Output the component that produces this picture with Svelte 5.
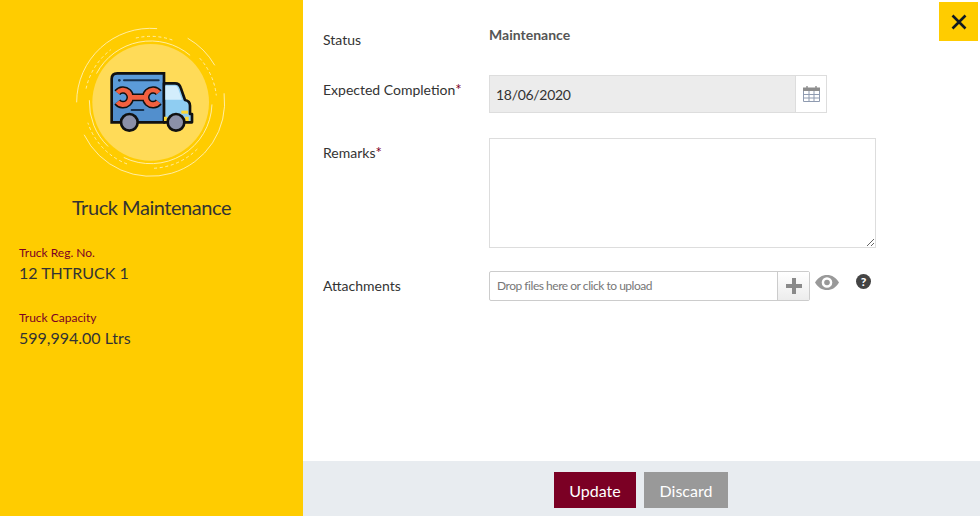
<script>
	const cx = 272;
	const cy = 262;

	// rings round the truck: radius, start and end angle (clockwise from 12 o'clock), dashed
	const rings = [
		[222, 270, 365, false],
		[222, 30, 60, false],
		[222, 83, 244, false],
		[198, 347, 380, true],
		[198, 48, 84, true],
		[198, 135, 178, true],
		[198, 201, 252, true],
		[198, 282, 323, true],
		[184, 298, 400, false],
		[184, 92, 206, false],
		[184, 224, 272, false]
	];

	function arc(r, from, to) {
		const a = ((from - 90) * Math.PI) / 180;
		const b = ((to - 90) * Math.PI) / 180;
		const big = to - from > 180 ? 1 : 0;
		const x0 = (cx + r * Math.cos(a)).toFixed(1);
		const y0 = (cy + r * Math.sin(a)).toFixed(1);
		const x1 = (cx + r * Math.cos(b)).toFixed(1);
		const y1 = (cy + r * Math.sin(b)).toFixed(1);
		return `M${x0} ${y0}A${r} ${r} 0 ${big} 1 ${x1} ${y1}`;
	}

	const wrench = 'M172 233A22 22 0 1 1 172 261M207 247H261M296 233A22 22 0 1 0 296 261';
</script>

<div class="page">
	<aside class="side">
		<svg class="badge" viewBox="0 0 540 510" width="180" height="170" aria-hidden="true">
			<circle cx={cx} cy={cy} r="175" fill="#ffdb58" />
			{#each rings as [r, from, to, dashed]}
				<path d={arc(r, from, to)} fill="none" stroke="#fff3c4" stroke-width="2.5" stroke-dasharray={dashed ? '9 8' : 'none'} />
			{/each}

			<!-- box -->
			<path d="M155 322V192Q155 175 172 175H312V322Z" fill="#5b9bd9" stroke="#111" stroke-width="8" />
			<path d="M159 262H308V318H159Z" fill="#528fcd" />
			<circle cx="178" cy="196" r="4" fill="#17324f" />
			<path d="M192 196H296M215 285H250" stroke="#17324f" stroke-width="6" stroke-linecap="round" />

			<!-- wrench -->
			<path d={wrench} fill="none" stroke="#111" stroke-width="23" />
			<path d={wrench} fill="none" stroke="#f2603f" stroke-width="14" />

			<!-- cab -->
			<path d="M312 205H345Q358 205 362 218L375 255Q390 258 390 272V297H396V322H312Z" fill="#8fcdf2" stroke="#111" stroke-width="8" stroke-linejoin="round" />
			<path d="M316 212H345Q352 212 355 222L366 254H316Z" fill="#d3edfc" />
			<path d="M364 287H384V296H364Z" fill="#fdd835" />
			<path d="M312 305H322V318H312ZM375 305H386V318H375Z" fill="#fdd835" />

			<!-- wheels -->
			<circle cx="208" cy="322" r="25" fill="#8b90a8" stroke="#111" stroke-width="8" />
			<circle cx="348" cy="322" r="25" fill="#8b90a8" stroke="#111" stroke-width="8" />
		</svg>

		<h2 class="title">Truck Maintenance</h2>

		<div class="info">
			<div class="info-label">Truck Reg. No.</div>
			<div class="info-value">12 THTRUCK 1</div>
		</div>
		<div class="info">
			<div class="info-label">Truck Capacity</div>
			<div class="info-value">599,994.00 Ltrs</div>
		</div>
	</aside>

	<main class="main">
		<form class="form">
			<div class="label status-label">Status</div>
			<div class="status-value">Maintenance</div>

			<div class="label">Expected Completion<span class="req">*</span></div>
			<div class="date-field">
				<input class="date-input" type="text" value="18/06/2020" readonly />
				<span class="date-btn">
					<svg viewBox="0 0 17 16" width="17" height="16" aria-hidden="true">
						<path d="M4 0V2M13 0V2" stroke="#8d8d8d" stroke-width="1.4" />
						<rect x="0" y="1.5" width="17" height="3.5" fill="#8d8d8d" />
						<path d="M.5 5V15.5H16.5V5M.5 8.5H16.5M.5 12H16.5M6 5V15.5M11 5V15.5" fill="none" stroke="#8f9bb0" stroke-width="1" />
					</svg>
				</span>
			</div>

			<div class="label">Remarks<span class="req">*</span></div>
			<div><textarea class="remarks"></textarea></div>

			<div class="label">Attachments</div>
			<div class="attach-row">
				<div class="upload">
					<span class="upload-text">Drop files here or click to upload</span>
					<span class="upload-btn">
						<svg viewBox="0 0 16 16" width="16" height="16" aria-hidden="true">
							<path d="M6 0H10V6H16V10H10V16H6V10H0V6H6Z" fill="#8a8a8a" />
						</svg>
					</span>
				</div>
				<svg class="eye" viewBox="0 0 24 15" width="24" height="15" aria-hidden="true">
					<path fill-rule="evenodd" d="M0 7.5C3 2.5 7 0 12 0S21 2.5 24 7.5C21 12.5 17 15 12 15S3 12.5 0 7.5ZM12 2.2A5.3 5.3 0 1 0 12 12.8A5.3 5.3 0 1 0 12 2.2Z" fill="#999" />
					<circle cx="12" cy="7.5" r="2.8" fill="#999" />
				</svg>
				<span class="help">?</span>
			</div>
		</form>

		<footer class="footer">
			<button class="btn btn-update" type="button">Update</button>
			<button class="btn btn-discard" type="button">Discard</button>
		</footer>

		<button class="close" type="button" aria-label="Close">
			<svg viewBox="0 0 16 16" width="16" height="16" aria-hidden="true">
				<path d="M1.5 1.5L14.5 14.5M14.5 1.5L1.5 14.5" stroke="#111a22" stroke-width="2.6" />
			</svg>
		</button>
	</main>
</div>

<style>
	:global(body) {
		margin: 0;
		background: #fff;
	}

	.page {
		display: flex;
		width: 980px;
		height: 516px;
		overflow: hidden;
		font-family: Lato, "Open Sans", sans-serif;
		color: #333;
	}

	.side {
		width: 303px;
		flex: none;
		background: #ffcc00;
		padding-top: 15px;
		box-sizing: border-box;
	}

	.badge {
		display: block;
		margin-left: 60px;
	}

	.title {
		margin: 10px 0 26px;
		font-size: 20px;
		font-weight: 400;
		line-height: 24px;
		letter-spacing: -0.45px;
		text-align: center;
	}

	.info {
		padding-left: 19px;
		margin-bottom: 25px;
	}

	.info-label {
		font-size: 12px;
		line-height: 16px;
		color: #7b0024;
	}

	.info-value {
		font-size: 16px;
		line-height: 24px;
	}

	.main {
		position: relative;
		flex: 1;
		display: flex;
		flex-direction: column;
	}

	.form {
		flex: 1;
		display: grid;
		grid-template-columns: 166px 1fr;
		grid-template-rows: 49px 63px 133px 30px;
		padding: 26px 0 0 20px;
	}

	.label {
		font-size: 14px;
		line-height: 18px;
		padding-top: 6px;
	}

	.status-label {
		padding-top: 5px;
	}

	.req {
		color: #7b0024;
		font-size: 15px;
		line-height: 0;
	}

	.status-value {
		font-size: 14px;
		font-weight: 700;
		line-height: 18px;
		color: #555;
	}

	.date-field {
		display: flex;
		width: 338px;
		height: 38px;
	}

	.date-input {
		flex: 1;
		min-width: 0;
		box-sizing: border-box;
		height: 38px;
		padding: 0 6px;
		border: 1px solid #ddd;
		border-right: none;
		background: #ececec;
		font: 14px Lato, sans-serif;
		letter-spacing: -0.3px;
		color: #333;
		outline: none;
	}

	.date-btn {
		width: 32px;
		box-sizing: border-box;
		display: flex;
		align-items: center;
		justify-content: center;
		border: 1px solid #ddd;
		background: #fff;
	}

	.remarks {
		display: block;
		box-sizing: border-box;
		width: 387px;
		height: 110px;
		margin: 0;
		padding: 6px;
		border: 1px solid #ddd;
		border-radius: 0;
		outline: none;
		font: 14px Lato, sans-serif;
	}

	.attach-row {
		display: flex;
		align-items: flex-start;
	}

	.upload {
		display: flex;
		width: 321px;
		height: 30px;
		box-sizing: border-box;
		border: 1px solid #ccc;
		border-radius: 2px;
	}

	.upload-text {
		flex: 1;
		padding-left: 7px;
		font-size: 12px;
		line-height: 28px;
		letter-spacing: -0.47px;
		color: #777;
	}

	.upload-btn {
		width: 31px;
		display: flex;
		align-items: center;
		justify-content: center;
		border-left: 1px solid #ccc;
		background: linear-gradient(#fff, #ececec);
	}

	.eye {
		margin: 4px 0 0 5px;
	}

	.help {
		width: 15px;
		height: 15px;
		margin: 3px 0 0 17px;
		border-radius: 50%;
		background: #444;
		color: #fff;
		font-size: 12px;
		font-weight: 900;
		line-height: 15px;
		text-align: center;
	}

	.footer {
		height: 55px;
		flex: none;
		box-sizing: border-box;
		display: flex;
		justify-content: center;
		gap: 8px;
		padding: 11px 1px 0 0;
		background: #e8ecf0;
	}

	.btn {
		height: 36px;
		padding: 0;
		border: none;
		color: #fff;
		font: 16px Lato, sans-serif;
		cursor: pointer;
	}

	.btn-update {
		width: 82px;
		background: #7b0024;
	}

	.btn-discard {
		width: 84px;
		background: #999;
	}

	.close {
		position: absolute;
		top: 2px;
		right: 2px;
		width: 39px;
		height: 39px;
		padding: 0;
		border: none;
		background: #ffcc00;
		display: flex;
		align-items: center;
		justify-content: center;
		cursor: pointer;
	}
</style>
